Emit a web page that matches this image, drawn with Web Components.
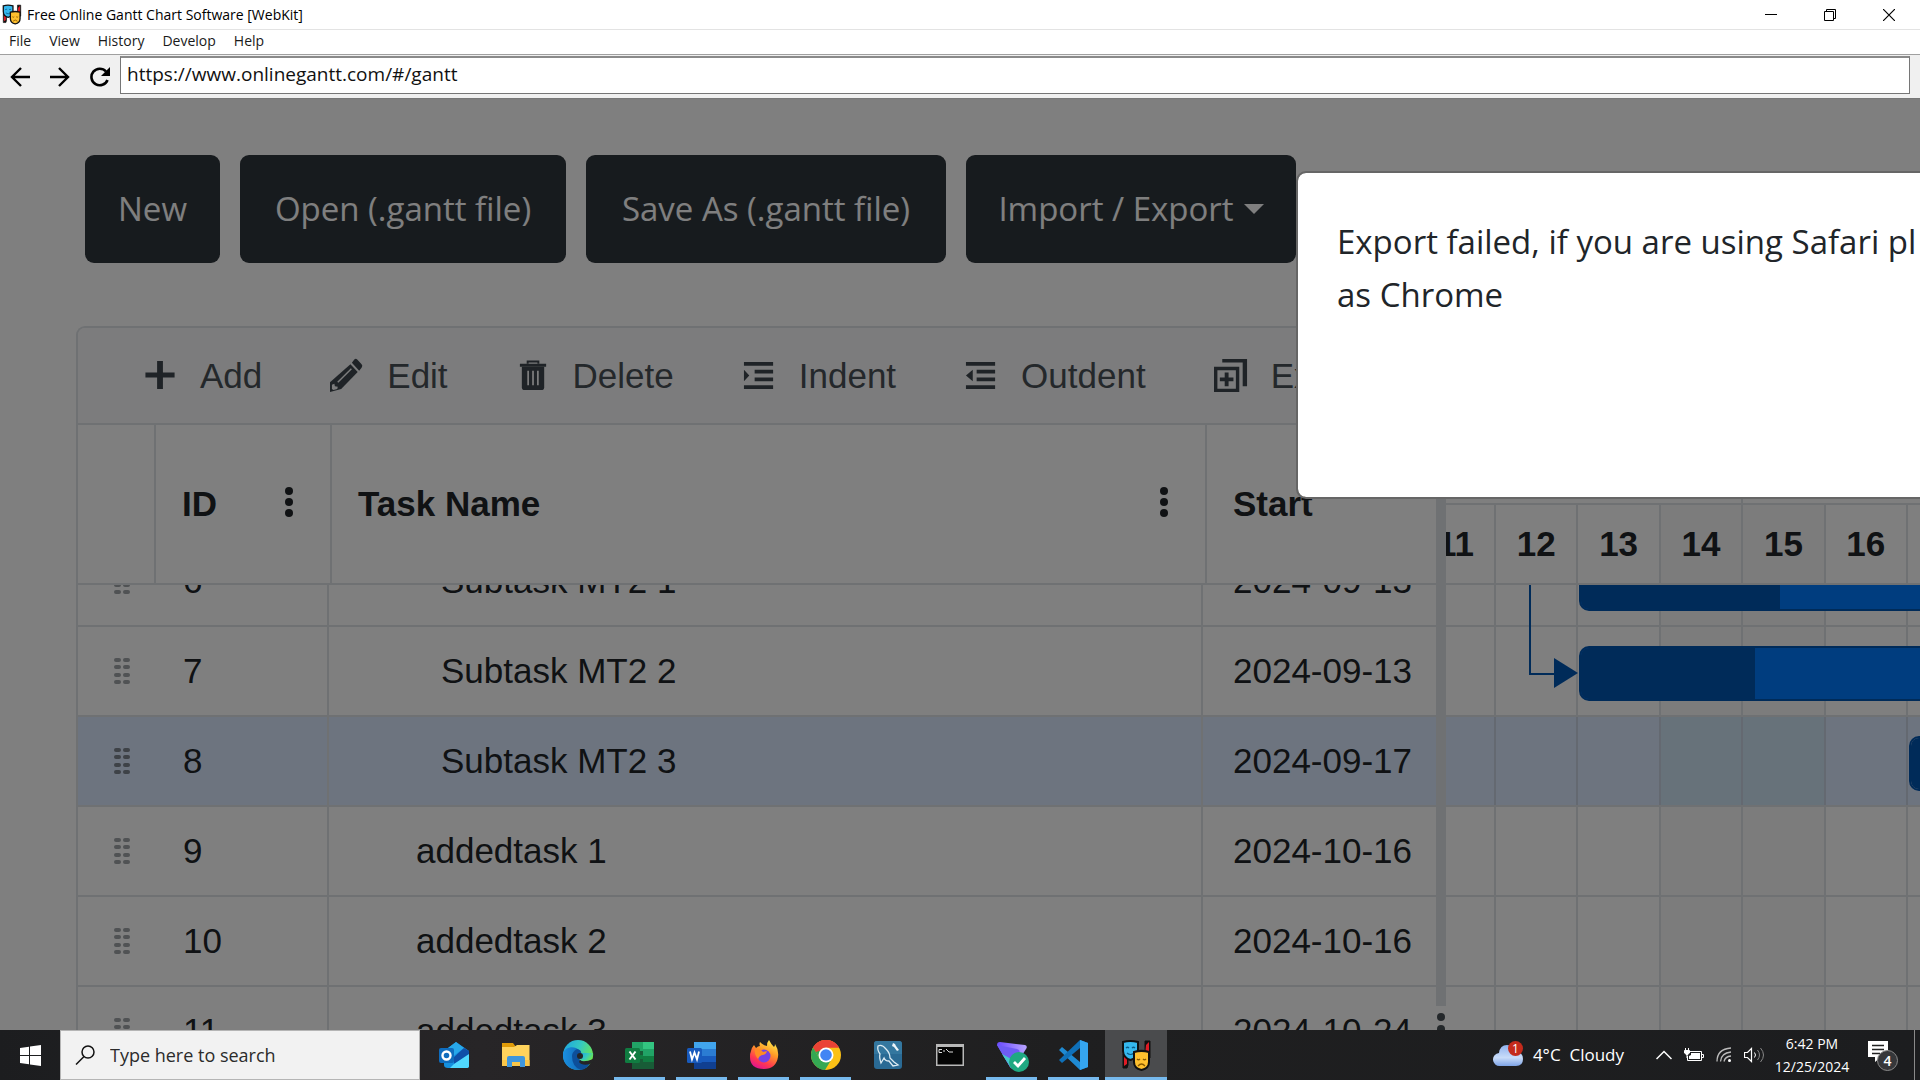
<!DOCTYPE html>
<html lang="en">
<head>
<meta charset="utf-8">
<title>Free Online Gantt Chart Software</title>
<style>
html, body { margin: 0; height: 100%; }
body { display: flex; flex-direction: column; overflow: hidden; background: #fff; font-family: "Open Sans", "Noto Sans", sans-serif; }
browser-frame { flex: 1; min-height: 0; }
</style>
</head>
<body>
<browser-frame>
  <gantt-page></gantt-page>
</browser-frame>
<task-bar></task-bar>

<script>
const define = (name, html, setup) => {
  const template = document.createElement('template');
  template.innerHTML = html;
  customElements.define(name, class extends HTMLElement {
    constructor() {
      super();
      this.attachShadow({ mode: 'open' }).append(template.content.cloneNode(true));
    }
    connectedCallback() { if (setup) setup(this, this.shadowRoot); }
  });
};

const MASKS = `
  <path d="M2 14v14h4l1-3v-10z" fill="#111" stroke="#111"/><path d="M3 16v10l3-2v-7z" fill="#e01b24"/>
  <path d="M24 1h5v17h-5z" fill="#111" stroke="#111"/><path d="M25 5l3-3v14h-4z" fill="#e01b24"/>
  <path d="M2 2q7-2 15 0v10c0 4-4 7-7.500 8C5 19 2 15 2 11z" fill="#35b8ee" stroke="#111" stroke-width="2"/>
  <path d="M5 8q1.500-1.500 3 0M11 8q1.500-1.500 3 0M6 13q3.500 3 7 0" fill="none" stroke="#0b5b86" stroke-width="1.200"/>
  <path d="M13 12c5-1.500 10-1.500 15 0v10c0 4-3 7-7.500 8-4.500-1-7.500-4-7.500-8z" fill="#ffc02e" stroke="#111" stroke-width="2"/>
  <path d="M16 19q1.500 1.500 3 0M22 19q1.500 1.500 3 0M17 26q3.500-4 7 0" fill="none" stroke="#8a5a00" stroke-width="1.300"/>`;

/* ---------- browser window ---------- */
define('window-title', `
<style>
  :host { display: flex; align-items: center; height: 29px; border-bottom: 1px solid #e3e3e3; padding: 0 2px; background: #fff; color: #000; font-size: 14px; line-height: 20px; }
  svg { display: block; }
  .name { flex: 1; padding-left: 5px; white-space: nowrap; }
  button { all: unset; width: 59px; height: 28px; display: grid; place-items: center; }
</style>
<svg width="20" height="21" viewBox="0 0 31 31">${MASKS}</svg>
<span class="name"><slot></slot></span>
<button aria-label="Minimize"><svg width="12" height="12"><path d="M0 5.500h12" stroke="#000"/></svg></button>
<button aria-label="Restore"><svg width="12" height="12" fill="none" stroke="#000"><path d="M.5 2.500h9v9h-9z M2.500 2.500v-2h9v9h-2"/></svg></button>
<button aria-label="Close"><svg width="12" height="12"><path d="M0 0l12 12M12 0L0 12" stroke="#000" stroke-width="1.200"/></svg></button>
`);

define('window-menu', `
<style>
  :host { display: block; border-bottom: 1px solid #a0a0a0; background: #fff; }
  nav { display: flex; gap: 18px; padding: 0 9px 2px; height: 22px; align-items: center; }
  button { all: unset; font-size: 14px; line-height: 20px; color: #1a1a1a; }
</style>
<nav><button>File</button><button>View</button><button>History</button><button>Develop</button><button>Help</button></nav>
`);

define('address-bar', `
<style>
  :host { display: flex; align-items: center; height: 43px; padding-right: 10px; background: #f0f0f0; }
  button { all: unset; width: 40px; height: 40px; display: grid; place-items: center; }
  svg { display: block; }
  input { flex: 1; min-width: 0; box-sizing: border-box; height: 38px; margin: 0 0 3px; padding: 0 6px 4px; border: 1px solid #767676; border-top: 2px solid #8a8a8a; background: #fff; color: #111; font-family: inherit; font-size: 19px; outline: 0; border-radius: 0; }
</style>
<button aria-label="Back"><svg width="20" height="20" viewBox="0 0 20 20" fill="none" stroke="#000" stroke-width="2.400"><path d="M20 10H2M11 1L2 10l9 9"/></svg></button>
<button aria-label="Forward"><svg width="20" height="20" viewBox="0 0 20 20" fill="none" stroke="#000" stroke-width="2.400"><path d="M0 10h18M9 1l9 9-9 9"/></svg></button>
<button aria-label="Reload"><svg width="20" height="20" viewBox="0 0 20 20"><path d="M17.500 13A8.300 8.300 0 1 1 16 4.500" fill="none" stroke="#000" stroke-width="2.600"/><path d="M20 0v9h-9z"/></svg></button>
<input type="text" aria-label="Address" value="https://www.onlinegantt.com/#/gantt">
`);

define('browser-frame', `
<style>
  :host { display: flex; flex-direction: column; overflow: hidden; }
  main { flex: 1; min-height: 0; display: flex; border-top: 1px solid #777; }
  ::slotted(*) { flex: 1; min-width: 0; }
</style>
<window-title>Free Online Gantt Chart Software [WebKit]</window-title>
<window-menu></window-menu>
<address-bar></address-bar>
<main><slot></slot></main>
`);

/* ---------- page ---------- */
define('page-button', `
<style>
  :host { display: block; }
  button { box-sizing: border-box; width: 100%; height: 108px; padding: 0; border: 0; border-radius: 9px; background: #2f363c; color: #fff; font-family: inherit; font-size: 33px; line-height: 52px; white-space: nowrap; display: flex; align-items: center; justify-content: center; gap: 10px; }
  .caret { display: none; border: 10px solid transparent; border-top-color: #fff; border-bottom: 0; }
  :host([menu]) .caret { display: block; }
</style>
<button><slot></slot><span class="caret"></span></button>
`);

const TOOL_ICONS = {
  add: '<path d="M14.500 3h6v12h12v5h-12v12h-6V20h-12v-5h12z"/>',
  edit: '<path d="M25 1.500q1.500-1.500 3 0l4.500 5q1.500 1.500 0 3.500l-2.500 3-7.500-8z"/><path d="M21 6.500l7.500 8L11.500 32 0 35V25z"/><path d="M8 25L22 11" stroke="#f8f9fa" stroke-width="1.500"/><path d="M2 27.500l2.500-1 .5 2.500 3 .5-.5 2.500-4 1-1.500-1z" fill="#f8f9fa"/>',
  delete: '<path d="M4 6h27v3H4z"/><path d="M12 6V3.500h11V6" fill="none" stroke="#3f474e" stroke-width="2"/><path d="M6 9h23v21q0 3-3 3H9q-3 0-3-3z"/><path d="M12.500 13v15M17.500 13v15M22.500 13v15" stroke="#f8f9fa" stroke-width="1.800"/>',
  indent: '<path d="M2 4h30v4H2zM13 12h19v4H13zM13 20h19v4H13zM2 28h30v4H2zM2 12l5.500 6L2 24z"/>',
  outdent: '<path d="M2 4h30v4H2zM13 12h19v4H13zM13 20h19v4H13zM2 28h30v4H2zM9 12l-7 6 7 6z"/>',
  expand: '<path d="M8.500 1H34v28h-4.500V4.500h-21z"/><path d="M0 9h26v26H0zM3.500 12.500v19h19v-19z"/><path d="M11 15h4v5h5v4h-5v5h-4v-5H6v-4h5z"/>'
};
define('tool-item', `
<style>
  :host { display: block; flex: none; }
  button { all: unset; display: flex; align-items: center; gap: 22px; color: #495057; font: 35px/40px "Liberation Sans", sans-serif; white-space: nowrap; }
  svg { display: block; fill: #3f474e; }
</style>
<button><svg width="35" height="35" viewBox="0 0 36 36"></svg><slot></slot></button>
`, (el, root) => { root.querySelector('svg').innerHTML = TOOL_ICONS[el.getAttribute('icon')]; });

define('task-grid', `
<style>
  :host { display: flex; flex-direction: column; min-width: 0; font: 35px/40px "Liberation Sans", sans-serif; color: #212529; }
  table { width: 100%; table-layout: fixed; border-collapse: separate; border-spacing: 0; }
  th, td { box-sizing: border-box; padding: 0; text-align: left; vertical-align: middle; white-space: nowrap; overflow: hidden; border-bottom: 2px solid #dee2e6; }
  th { height: 160px; border-right: 2px solid #dee2e6; font-weight: bold; }
  th > div { display: flex; align-items: center; justify-content: space-between; padding: 0 29px 0 26px; }
  th:last-child { border-right: 0; }
  button { all: unset; width: 24px; height: 36px; padding-bottom: 4px; display: grid; place-items: center; }
  svg { display: block; }
  .body { flex: 1; min-height: 0; overflow: hidden; }
  .body table { margin-top: -48px; }
  td { height: 90px; border-right: 2px solid #dee2e6; padding-left: 28px; }
  td:nth-child(1) { border-right: 0; padding-left: 36px; }
  td:nth-child(3) { padding-left: 87px; }
  td:nth-child(3).child { padding-left: 112px; }
  td:nth-child(4) { padding-left: 30px; border-right: 0; }
  tr.selected td { background: #dbe9ff; }
  td svg { color: #a0a4a8; }
  tr.selected svg { color: #7c848e; }
</style>
<table>
  <colgroup><col style="width:78px"><col style="width:176px"><col><col style="width:229px"></colgroup>
  <thead><tr>
    <th></th>
    <th><div>ID<button aria-label="ID column menu"><svg width="8" height="32"><g fill="#212529"><circle cx="4" cy="5" r="4"/><circle cx="4" cy="16" r="4"/><circle cx="4" cy="27" r="4"/></g></svg></button></div></th>
    <th><div>Task Name<button aria-label="Task Name column menu"><svg width="8" height="32"><g fill="#212529"><circle cx="4" cy="5" r="4"/><circle cx="4" cy="16" r="4"/><circle cx="4" cy="27" r="4"/></g></svg></button></div></th>
    <th><div>Start</div></th>
  </tr></thead>
</table>
<div class="body"><table>
  <colgroup><col style="width:77px"><col style="width:174px"><col><col style="width:233px"></colgroup>
  <tbody></tbody>
</table></div>
`, (el, root) => {
  const rows = [
    [6, 'Subtask MT2 1', '2024-09-13', 'child'],
    [7, 'Subtask MT2 2', '2024-09-13', 'child'],
    [8, 'Subtask MT2 3', '2024-09-17', 'child', 'selected'],
    [9, 'addedtask 1', '2024-10-16', ''],
    [10, 'addedtask 2', '2024-10-16', ''],
    [11, 'addedtask 3', '2024-10-24', '']
  ];
  let pills = '';
  for (const y of [0, 7, 15, 22]) pills += `<rect x="0" y="${y}" width="7" height="4" rx="2"/><rect x="9" y="${y}" width="7" height="4" rx="2"/>`;
  const grip = `<svg width="16" height="26" fill="currentColor">${pills}</svg>`;
  root.querySelector('tbody').innerHTML = rows.map(([id, name, start, level, state]) =>
    `<tr class="${state || ''}"><td>${grip}</td><td>${id}</td><td class="${level}">${name}</td><td>${start}</td></tr>`).join('');
});

define('pane-splitter', `
<style>
  :host { display: flex; flex-direction: column; width: 10px; flex: none; }
  .bar { flex: 1; background: #dee2e6; }
  .grip { height: 24px; overflow: hidden; }
  svg { display: block; }
</style>
<div class="bar"></div>
<div class="grip"><svg width="10" height="44" fill="#495057"><circle cx="5" cy="11" r="4"/><circle cx="5" cy="23" r="4"/><circle cx="5" cy="35" r="4"/></svg></div>
`);

define('gantt-timeline', `
<style>
  :host { display: flex; flex-direction: column; min-width: 0; overflow: hidden; font: bold 35px/40px "Liberation Sans", sans-serif; color: #212529; }
  .cols { display: grid; grid-template-columns: 50px repeat(5, 1fr) 12px; box-sizing: border-box; border-bottom: 2px solid #dee2e6; }
  .cols > div { border-right: 2px solid #dee2e6; display: flex; align-items: center; justify-content: center; overflow: hidden; }
  .cols > div:first-child { justify-content: flex-end; padding-right: 20px; }
  .cols > div:last-child { border-right: 0; }
  .cols > .off { background: #f8f8f8; }
  .months { height: 80px; flex: none; }
  .months > div { border-right: 0; }
  .months > div:nth-child(4) { border-right: 2px solid #dee2e6; }
  .days { height: 80px; flex: none; }
  .body { flex: 1; min-height: 0; overflow: hidden; position: relative; }
  .rows { margin-top: -48px; }
  .rows .cols { height: 90px; }
  .rows .selected > div { background: #dbe9ff; border-color: #c8d2e2; }
  .rows .selected > .off { background: #cfe4f4; }
  .bar { position: absolute; left: 133px; right: -40px; height: 55px; box-sizing: border-box; border: 2px solid #0056b3; border-radius: 10px; background: #007bff; overflow: hidden; }
  .done { height: 100%; background: #0056b3; }
  .first { top: -29px; } .second { top: 61px; } .third { top: 151px; left: 463px; }
  .link { position: absolute; left: 82px; top: 0; }
</style>
<div class="cols months"><div></div><div></div><div></div><div></div><div></div><div></div><div></div></div>
<div class="cols days"><div>11</div><div>12</div><div>13</div><div class="off">14</div><div class="off">15</div><div>16</div><div></div></div>
<div class="body">
  <div class="rows"></div>
  <div class="bar first"><div class="done" style="width:199px"></div></div>
  <div class="bar second"><div class="done" style="width:174px"></div></div>
  <div class="bar third"><div class="done"></div></div>
  <svg class="link" width="52" height="104"><path d="M2 0v89h25" fill="none" stroke="#0056b3" stroke-width="2"/><path d="M26 73l24 15-24 15z" fill="#0056b3"/></svg>
</div>
`, (el, root) => {
  const cells = '<div></div><div></div><div></div><div class="off"></div><div class="off"></div><div></div><div></div>';
  root.querySelector('.rows').innerHTML = [0, 0, 1, 0, 0, 0].map(s => `<div class="cols${s ? ' selected' : ''}">${cells}</div>`).join('');
});

define('alert-dialog', `
<style>
  :host { display: block; box-sizing: border-box; border: 2px solid #666; border-right: 0; border-radius: 10px 0 0 10px; background: #fff; padding: 42px 0 0 39px; height: 328px; overflow: hidden; background-clip: padding-box; }
  p { margin: 0; color: #212529; font-size: 33px; line-height: 53px; white-space: nowrap; }
</style>
<p role="alert"><slot></slot></p>
`);

define('gantt-page', `
<style>
  :host { display: flex; flex-direction: column; position: relative; overflow: hidden; background: #fff; }
  .actions { display: flex; gap: 20px; padding: 56px 0 63px 85px; }
  .new { width: 135px; } .open { width: 326px; } .save { width: 360px; } .port { width: 330px; }
  .card { flex: 1; min-height: 0; margin-left: 76px; display: flex; flex-direction: column; border: 2px solid #dee2e6; border-width: 2px 0 0 2px; border-radius: 9px 0 0 0; overflow: hidden; }
  .tools { display: flex; align-items: center; gap: 68px; height: 95px; padding-left: 65px; background: #f8f9fa; border-bottom: 2px solid #dee2e6; }
  .panes { flex: 1; min-height: 0; display: flex; }
  task-grid { flex: 1358 1 0; }
  gantt-timeline { flex: 474 1 0; }
  .shade { position: absolute; inset: 0; background: rgba(0, 0, 0, .5); }
  alert-dialog { position: absolute; left: 1296px; right: 0; top: 72px; }
</style>
<div class="actions">
  <page-button class="new">New</page-button>
  <page-button class="open">Open (.gantt file)</page-button>
  <page-button class="save">Save As (.gantt file)</page-button>
  <page-button class="port" menu>Import / Export</page-button>
</div>
<div class="card">
  <div class="tools">
    <tool-item icon="add">Add</tool-item>
    <tool-item icon="edit">Edit</tool-item>
    <tool-item icon="delete">Delete</tool-item>
    <tool-item icon="indent">Indent</tool-item>
    <tool-item icon="outdent">Outdent</tool-item>
    <tool-item icon="expand">Expand all</tool-item>
  </div>
  <div class="panes">
    <task-grid></task-grid>
    <pane-splitter></pane-splitter>
    <gantt-timeline></gantt-timeline>
  </div>
</div>
<div class="shade"></div>
<alert-dialog>Export failed, if you are using Safari pl<br>as Chrome</alert-dialog>
`);

/* ---------- taskbar ---------- */
const APPS = {
  Outlook: '<path d="M5 11L17 2l13 9v15q0 2-3 2H9q-4 0-4-3z" fill="#1490df"/><path d="M5 11L17 2l8 6-12 9z" fill="#28a8ea"/><path d="M15 17L25 8l5 3v4L15 24z" fill="#0f4fa8"/><path d="M30 14v12q0 2-3 2H11l4-4z" fill="#50d9ff"/><rect y="8" width="15" height="15" rx="2" fill="#0f6cbd"/><circle cx="7.500" cy="15.500" r="4" fill="none" stroke="#fff" stroke-width="2.400"/>',
  'File Explorer': '<path d="M1 3h11l3 4H1z" fill="#e09b08"/><path d="M1 7h12l3-2h12.500v21H1z" fill="#ffd35c"/><path d="M1 20h27.500v6H1z" fill="#f8c548"/><path d="M6 27V18q0-2 2-2h14q2 0 2 2v9h-5v-5h-8v5z" fill="#3e96dc"/>',
  Edge: '<defs><linearGradient id="e1" x1="0" x2="1" y1=".2" y2=".6"><stop stop-color="#1ea7e0"/><stop offset=".5" stop-color="#35c9c0"/><stop offset="1" stop-color="#6ee84a"/></linearGradient><linearGradient id="e2" x1="0" x2="1"><stop stop-color="#1b8fe0"/><stop offset="1" stop-color="#0c59a4"/></linearGradient></defs><circle cx="15" cy="15" r="15" fill="url(#e1)"/><path d="M0 13C2 8 8 6 13 8q5 2 5 6-4 1-3 6 3 5 12 3-4 7-12 7C6 30-1 23 0 13z" fill="url(#e2)"/><path d="M9 16q0-4 5-7 5 1 4 5-4 3-1 6 4 3 10 3-3 6-9 7Q9 27 9 16z" fill="#0d4f9a"/><path d="M17 20q3 3 13-1l1 3-4 2q-8 2-11-2z" fill="#252526"/><path d="M18 13q-3 3 0 6 5 2 9 1 4-3 3-7z" fill="url(#e1)"/><circle cx="17" cy="16" r="3" fill="#252526"/>',
  Excel: '<path d="M7 2h11v9H7z" fill="#21a366"/><path d="M18 2h11v9H18z" fill="#33c481"/><path d="M7 11h11v14H7z" fill="#185c37"/><path d="M18 9h11v7H18z" fill="#21a366"/><path d="M7 15h11v4H7z" fill="#107c41"/><path d="M18 16h11v6H18z" fill="#107c41"/><path d="M7 22h22v7H7z" fill="#185c37"/><rect y="8" width="15" height="15" rx="1.500" fill="#107c41"/><path d="M4.500 11.500l6 8M10.500 11.500l-6 8" stroke="#fff" stroke-width="2"/>',
  Word: '<path d="M7 2h22v7H7z" fill="#41a5ee"/><path d="M7 9h22v7H7z" fill="#2b7cd3"/><path d="M7 16h22v6H7z" fill="#185abd"/><path d="M7 22h22v7H7z" fill="#103f91"/><rect y="8" width="15" height="15" rx="1.500" fill="#185abd"/><path d="M3 11.500l2 8 2.500-7 2.500 7 2-8" fill="none" stroke="#fff" stroke-width="1.800"/>',
  Firefox: '<defs><linearGradient id="f1" x1=".8" y1="0" x2=".3" y2="1"><stop stop-color="#fff14f"/><stop offset=".4" stop-color="#ff9a26"/><stop offset=".75" stop-color="#ff3850"/><stop offset="1" stop-color="#e01490"/></linearGradient></defs><path d="M2 11q1-4 3-6l2 3q2-2 4-2-1-2 0-4 3 3 7 4 0-4 2-6 2 4 5 7 1-1 1-3 4 6 3 13-2 12-14 12Q1 29 1 17q0-4 1-6z" fill="url(#f1)"/><circle cx="15" cy="16" r="6.500" fill="#7542e5"/><path d="M6 9q5-1 8 3l4-1q-1 4-5 4-3 1-4 4-4-4-3-10z" fill="#ff8b24"/>',
  Chrome: '<circle cx="15" cy="15" r="15" fill="#fbc116"/><path d="M2 7.500A15 15 0 0 0 14 30l7-11.500L15 15 8.500 18.800z" fill="#34a853"/><path d="M2 7.500A15 15 0 0 1 28 7.500H15z" fill="#ea4335"/><path d="M2 7.500L8.500 18.800 15 15V7.500z" fill="#34a853"/><path d="M2 7.500A15 15 0 0 1 28 7.500H15L8 11 5 12z" fill="#ea4335"/><circle cx="15" cy="15" r="7.500" fill="#fff"/><circle cx="15" cy="15" r="5.800" fill="#4285f4"/>',
  'MySQL Workbench': '<rect x="1" y="1" width="28" height="28" rx="3" fill="#2a6a94"/><path d="M1 4q0-3 3-3h22q3 0 3 3v10H1z" fill="#34779f"/><path d="M5 6q4-2 8 3 4 4 4 9l4 4 4 3-5 1-4-5q-4 0-5-3l-3 5q-2-6-1-9-3-4-2-8z" fill="none" stroke="#dcebf3" stroke-width="1.300"/><path d="M20 3l2 1 1 2 3 4-2 1-3-4-2-1z" fill="#eef5f9"/>',
  'Command Prompt': '<rect x="1" y="4" width="28" height="22" fill="#b8b8b8"/><rect x="2.500" y="7" width="25" height="17.500" fill="#050505"/><path d="M4 9.500h3M4 9.500v3h3M9 10v2M11 9l3 3h4" stroke="#ddd" fill="none"/>',
  'Proton VPN': '<defs><linearGradient id="v1" x1="0" x2="1"><stop stop-color="#6a4bff"/><stop offset="1" stop-color="#b9a4ff"/></linearGradient></defs><path d="M0 5q0-3 3-3l25 3q3 1 1 4L17 28q-2 2-4-1z" fill="url(#v1)"/><path d="M0 5l20 4q4 1 2 4l-9 14z" fill="#6e5cf5"/><path d="M5 14l9 14 4-7z" fill="#45c9c9"/><circle cx="22" cy="22" r="10" fill="#1fa982"/><path d="M17 22l4 4 7-8" fill="none" stroke="#fff" stroke-width="2.800"/>',
  'Visual Studio Code': '<path d="M21 0l8 3v24l-8 3L0 10l3-3 18 15z" fill="#1f8ad2"/><path d="M21 0L0 20l3 3L21 8z" fill="#0f70b8"/><path d="M21 0l8 3v24l-8 3z" fill="#35a5ef"/>',
  Playwright: MASKS
};
define('task-app', `
<style>
  :host { display: block; width: 62px; flex: none; }
  button { all: unset; box-sizing: border-box; display: grid; place-items: center; width: 100%; height: 50px; position: relative; }
  svg { display: block; overflow: visible; }
  :host([running]) button::after { content: ""; position: absolute; bottom: 0; left: 5px; right: 6px; height: 3px; background: #76b9ed; }
  :host([active]) button { background: #4a4b4d; }
  :host([active]) button::after { left: 0; right: 0; }
</style>
<button><svg width="30" height="30" viewBox="0 0 30 30"></svg></button>
`, (el, root) => {
  const app = el.getAttribute('app');
  root.querySelector('button').setAttribute('aria-label', app);
  root.querySelector('svg').innerHTML = APPS[app];
});

define('task-bar', `
<style>
  :host { display: flex; height: 50px; background: linear-gradient(90deg, #1c1d1f, #272527 25%, #1f1f20 55%, #1c1d1f); color: #fff; flex: none; }
  svg { display: block; }
  button { all: unset; display: grid; place-items: center; }
  .start { width: 60px; }
  .search { box-sizing: border-box; width: 360px; display: flex; align-items: center; gap: 15px; padding-left: 14px; background: #f2f2f2; border: 1px solid #b5b5b5; }
  input { all: unset; flex: 1; min-width: 0; color: #2b2b2b; font-size: 18px; line-height: 24px; }
  .apps { display: flex; flex: 1; padding-left: 3px; }
  .tray { display: flex; align-items: center; }
  .weather { display: flex; align-items: center; gap: 10px; font-size: 17px; line-height: 24px; white-space: nowrap; padding-right: 32px; }
  .icons { display: flex; align-items: center; gap: 12px; }
  .clock { width: 90px; padding-left: 2px; text-align: center; font-size: 14px; line-height: 23px; }
  .notes { width: 38px; padding: 0 13px 0 6px; }
  .edge { width: 5px; height: 100%; border-left: 1px solid #8a8a8a; }
</style>
<button class="start" aria-label="Start"><svg width="21" height="21" fill="#fff"><path d="M0 3l9-1.300V10H0zM10 1.500L21 0v10H10zM0 11h9v8.300L0 18zM10 11h11v10l-11-1.500z"/></svg></button>
<label class="search"><svg width="20" height="20" fill="none" stroke="#111" stroke-width="1.500"><circle cx="13" cy="7" r="6"/><path d="M9 11.500L1 19.500"/></svg><input type="text" aria-label="Search" placeholder="Type here to search" value="Type here to search"></label>
<div class="apps">
  <task-app app="Outlook"></task-app><task-app app="File Explorer"></task-app><task-app app="Edge"></task-app>
  <task-app app="Excel" running></task-app><task-app app="Word" running></task-app><task-app app="Firefox" running></task-app>
  <task-app app="Chrome" running></task-app><task-app app="MySQL Workbench"></task-app><task-app app="Command Prompt"></task-app>
  <task-app app="Proton VPN" running></task-app><task-app app="Visual Studio Code" running></task-app><task-app app="Playwright" running active></task-app>
</div>
<div class="tray">
  <button class="weather"><svg width="30" height="28" viewBox="0 0 30 28"><defs><linearGradient id="c" x2="0" y2="1"><stop stop-color="#8fb2ee"/><stop offset=".6" stop-color="#c9dcf9"/><stop offset="1" stop-color="#7da3e6"/></linearGradient></defs><path d="M7 25a6.500 6.500 0 0 1-1-13Q7 4 14 4q6 0 8 6 8 1 8 8 0 7-7 7z" fill="url(#c)"/><circle cx="22.500" cy="7.500" r="7.500" fill="#c42b1c"/><text x="22.500" y="12" text-anchor="middle" font-size="12" fill="#fff">1</text></svg><span>4°C&nbsp; Cloudy</span></button>
  <div class="icons">
    <svg width="16" height="10" fill="none" stroke="#fff" stroke-width="1.500"><path d="M.5 9L8 1.500 15.500 9"/></svg>
    <svg width="20" height="16" fill="none" stroke="#fff"><path d="M6 4.500h11.500v9H3.500V9M17.500 7.500h2v3h-2"/><path d="M7 6h9v6H5V9l2-1z" fill="#fff" stroke="none"/><path d="M1.500 1v3M4.500 1v3M.5 3.500h5V6L3 8 .5 6zM3 7v4" fill="#fff"/></svg>
    <svg width="16" height="16" fill="none" stroke="#bbb" stroke-width="1.300"><path d="M1 14.500Q1 2 15 1M4.500 14.500Q5 6 15 5M8 14.500Q9 9.500 15 9"/><circle cx="13.500" cy="13.500" r="1.500" fill="#fff" stroke="none"/></svg>
    <svg width="21" height="18" fill="none" stroke="#fff"><path d="M.5 6.500h3l4-4v13l-4-4h-3z" stroke-width="1.200"/><path d="M10.500 6.500q2 2.500 0 5" /><path d="M13.500 4q4 5 0 10M16.500 2q6 7 0 14" stroke="#888"/></svg>
  </div>
  <div class="clock">6:42 PM<br>12/25/2024</div>
  <button class="notes" aria-label="4 notifications"><svg width="31" height="32" viewBox="0 0 31 32"><path d="M1 2h20v16h-7l-6 5v-5H1z" fill="#fff"/><path d="M5 6.500h12M5 10.500h12M5 14.500h8" stroke="#222" stroke-width="1.500"/><circle cx="20.500" cy="21.500" r="10" fill="#36373a" stroke="#8a8a8a"/><text x="20.500" y="27" text-anchor="middle" font-size="14" font-weight="600" fill="#fff">4</text></svg></button>
  <div class="edge"></div>
</div>
`);
</script>
</body>
</html>
